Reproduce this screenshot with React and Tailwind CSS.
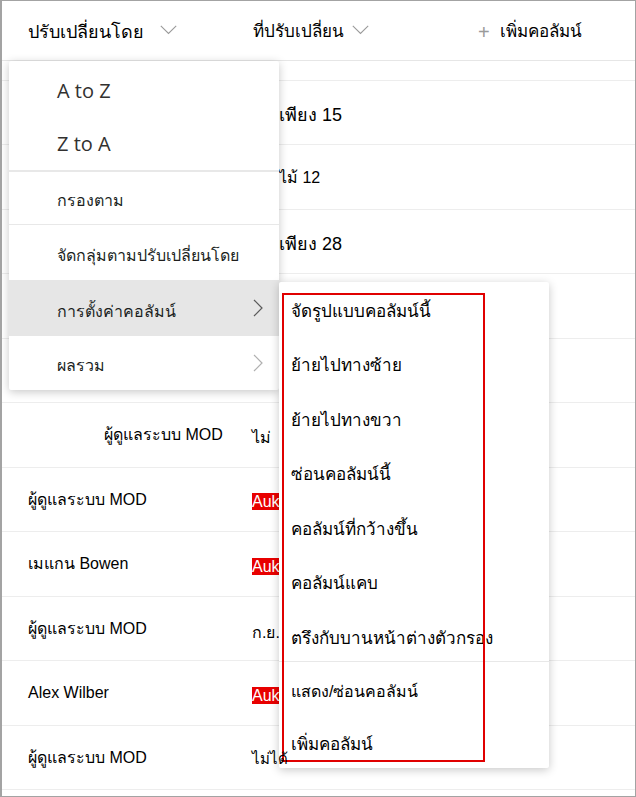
import React from "react";

const Chevron = ({ className }) => (
  <svg className={className} width="17" height="10" viewBox="0 0 17 10" fill="none">
    <path d="M0.8 0.8 L8.5 8.5 L16.2 0.8" stroke="currentColor" strokeWidth="1.1" />
  </svg>
);

const ChevronRight = ({ className }) => (
  <svg className={className} width="10" height="18" viewBox="0 0 10 18" fill="none">
    <path d="M1 1 L9 9 L1 17" stroke="currentColor" strokeWidth="1.2" />
  </svg>
);

const Red = () => (
  <span className="inline-block whitespace-nowrap bg-[#e80000] text-white text-[16px] leading-[17px] mt-[4px] pr-[1px]">
    Auk
  </span>
);

const rows = [
  { h: "h-[64px]", c1: null, c2: <span className="pl-[27px] text-[18px] mt-[6px]">เพียง 15</span> },
  { h: "h-[65px]", c1: null, c2: <span className="pl-[27px] mt-[2px]">ไม้ 12</span> },
  { h: "h-[64px]", c1: null, c2: <span className="pl-[27px] text-[18px] mt-[6px]">เพียง 28</span> },
  { h: "h-[65px]", c1: null, c2: null },
  { h: "h-[64px]", c1: null, c2: null },
  { h: "h-[65px]", c1: <span className="pl-[76px]">ผู้ดูแลระบบ MOD</span>, c2: <span className="mt-[6px]">ไม่</span> },
  { h: "h-[64px]", c1: "ผู้ดูแลระบบ MOD", c2: <Red /> },
  { h: "h-[65px]", c1: "เมแกน Bowen", c2: <Red /> },
  { h: "h-[64px]", c1: "ผู้ดูแลระบบ MOD", c2: <span className="mt-[8px]">ก.ย.</span> },
  { h: "h-[65px]", c1: "Alex Wilber", c2: <Red /> },
  { h: "h-[64px]", c1: "ผู้ดูแลระบบ MOD", c2: <span className="relative z-10 mt-[4px] text-[15px] whitespace-nowrap">ไม่ได้</span> },
  { h: "h-[20px]", c1: null, c2: null },
];

const subItems = [
  "จัดรูปแบบคอลัมน์นี้",
  "ย้ายไปทางซ้าย",
  "ย้ายไปทางขวา",
  "ซ่อนคอลัมน์นี้",
  "คอลัมน์ที่กว้างขึ้น",
  "คอลัมน์แคบ",
  "ตรึงกับบานหน้าต่างตัวกรอง",
];

export default function App() {
  const thai = "font-['Liberation_Sans','Noto_Sans','DejaVu_Sans',sans-serif]";
  return (
    <div
      className={`relative w-[636px] h-[797px] overflow-hidden bg-white border border-l-2 border-[#a3a3a3] text-black ${thai}`}
    >
      {/* header */}
      <div className="h-[60px] border-b border-[#e6e6e6] grid grid-cols-[250px_226px_1fr] items-center text-[17px]">
        <div className="flex items-center pl-[26px] pt-[3px]">
          <span className="text-[18px]">ปรับเปลี่ยนโดย</span>
          <Chevron className="ml-[16px] text-[#9a9a9a] mt-[-4px]" />
        </div>
        <div className="flex items-center pl-[1px] pt-[3px]">
          <span>ที่ปรับเปลี่ยน</span>
          <Chevron className="ml-[8px] text-[#9a9a9a] mt-[-4px]" />
        </div>
        <div className="flex items-center pt-[3px]">
          <span className="text-[#9a9a9a] text-[20px] font-light leading-none mr-[10px]">+</span>
          <span>เพิ่มคอลัมน์</span>
        </div>
      </div>
      <div className="h-[20px] border-b border-[#ededed]" />
      {rows.map((r, i) => (
        <div
          key={i}
          className={`${r.h} border-b border-[#ededed] grid grid-cols-[250px_1fr] items-center text-[16px]`}
        >
          <div className="pl-[26px]">{r.c1}</div>
          <div className="flex items-center">{r.c2}</div>
        </div>
      ))}

      {/* left dropdown menu */}
      <div className="absolute left-[7px] top-[60px] w-[270px] bg-white shadow-[0_2px_10px_rgba(0,0,0,0.22)] rounded-[2px]">
        <div className="pt-[3px] font-['Open_Sans','Noto_Sans',sans-serif] text-[20px] text-[#323130]">
          <div className="h-[53px] flex items-center pl-[48px]">A to Z</div>
          <div className="h-[53px] flex items-center pl-[48px]">Z to A</div>
        </div>
        <div className="h-[2px] bg-[#e8e8e8]" />
        <div className="text-[16px] text-[#201f1e]">
          <div className="h-[53px] flex items-center pl-[48px] pt-[6px] border-b border-[#e8e8e8]">กรองตาม</div>
          <div className="h-[55px] flex items-center pl-[48px] pt-[6px]">จัดกลุ่มตามปรับเปลี่ยนโดย</div>
          <div className="h-[56px] flex items-center justify-between pl-[48px] pr-[16px] bg-[#e6e6e6]">
            <span className="pt-[8px]">การตั้งค่าคอลัมน์</span>
            <ChevronRight className="text-[#5a5a5a]" />
          </div>
          <div className="h-[54px] flex items-center justify-between pl-[48px] pr-[16px]">
            <span className="pt-[5px]">ผลรวม</span>
            <ChevronRight className="text-[#b0b0b0]" />
          </div>
        </div>
      </div>

      {/* submenu */}
      <div className="absolute left-[277px] top-[281px] w-[270px] bg-white shadow-[0_2px_10px_rgba(0,0,0,0.22)] rounded-[2px] text-[17px] text-black">
        {subItems.map((t) => (
          <div key={t} className="h-[54.5px] flex items-center pl-[12px] pt-[4px]">
            {t}
          </div>
        ))}
        <div className="h-[1px] bg-[#e8e8e8] mt-[-3px] mb-[3px]" />
        <div className="h-[54px] flex items-center pl-[12px] pt-[1px] text-[16px]">แสดง/ซ่อนคอลัมน์</div>
        <div className="h-[49px] flex items-center pl-[12px] pt-[4px]">เพิ่มคอลัมน์</div>
      </div>

      {/* red annotation box */}
      <div className="absolute left-[280px] top-[292px] w-[203px] h-[469px] border-2 border-[#e00000]" />
    </div>
  );
}
